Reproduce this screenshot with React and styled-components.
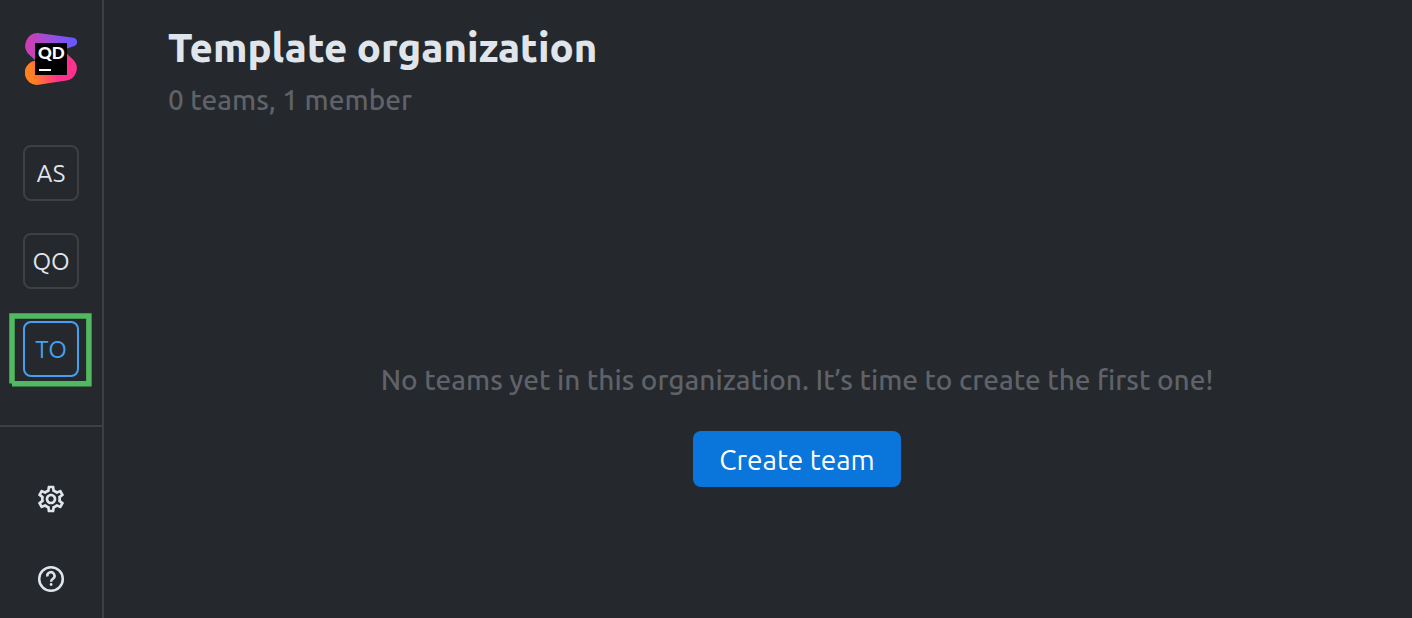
import React from 'react';
import styled, { createGlobalStyle } from 'styled-components';
import { MdOutlineSettings } from 'react-icons/md';

const GlobalStyle = createGlobalStyle`
  * { box-sizing: border-box; }
  body {
    margin: 0;
    background: #25282c;
    color: #dfe5eb;
    font-family: Ubuntu, "Noto Sans", sans-serif;
  }
`;

const Page = styled.div`
  display: flex;
  min-height: 100vh;
`;

const Sidebar = styled.aside`
  flex: none;
  display: flex;
  flex-direction: column;
  width: 104px;
  border-right: 2px solid #3e4044;
`;

const LogoLink = styled.a`
  display: block;
  align-self: center;
  height: 52px;
  margin-top: 33px;
`;

const Organizations = styled.nav`
  display: flex;
  flex-direction: column;
  align-items: center;
  gap: 32px;
  padding: 60px 0 48px;
  border-bottom: 2px solid #3e4044;
`;

const OrgSlot = styled.div`
  position: relative;
`;

const OrgButton = styled.button`
  display: grid;
  place-items: center;
  width: 56px;
  height: 56px;
  padding: 2px 0 0;
  border: 2px solid ${(p) => (p.$active ? '#46a0f0' : '#3e4044')};
  border-radius: 8px;
  background: transparent;
  color: ${(p) => (p.$active ? '#46a0f0' : '#dfe5eb')};
  font: inherit;
  font-size: 24px;
  line-height: 32px;
  cursor: pointer;
`;

const Highlight = styled.svg`
  position: absolute;
  top: -8px;
  left: -14px;
  pointer-events: none;
`;

const Tools = styled.div`
  display: flex;
  flex-direction: column;
  align-items: center;
  gap: 48px;
  padding: 56px 0 20px;
`;

const ToolButton = styled.button`
  display: block;
  width: 32px;
  height: 32px;
  padding: 0;
  border: 0;
  background: none;
  color: #dfe5eb;
  cursor: pointer;

  svg { display: block; }
`;

const Main = styled.main`
  flex: 1;
  display: flex;
  flex-direction: column;
  min-width: 0;
  padding: 24px 0 24px 64px;
`;

const Title = styled.h1`
  margin: 0;
  font-size: 40px;
  font-weight: 800;
  line-height: 48px;
`;

const Muted = styled.p`
  margin: 0;
  color: #5f6268;
  font-size: 28px;
  font-weight: 500;
  line-height: 40px;
`;

const Summary = styled(Muted)`
  margin-top: 8px;
`;

const EmptyState = styled.section`
  display: flex;
  flex-direction: column;
  align-items: center;
  gap: 31px;
  margin-top: 240px;
  padding-left: 14px;
  text-align: center;
`;

const PrimaryButton = styled.button`
  min-width: 208px;
  height: 56px;
  padding: 2px 16px 0;
  border: 0;
  border-radius: 8px;
  background: #0a75da;
  color: #fff;
  font: inherit;
  font-size: 28px;
  line-height: 40px;
  cursor: pointer;
`;

const LogoText = styled.text`
  fill: #fff;
  font-family: Lato, sans-serif;
  font-size: 17px;
  font-weight: 900;
`;

function Logo() {
  return (
    <svg width="52" height="52" viewBox="0 0 52 52" role="img" aria-label="Qodana">
      <defs>
        <linearGradient id="violet" x1="0" y1="14" x2="52" y2="6" gradientUnits="userSpaceOnUse">
          <stop offset="0.1" stopColor="#cb3fb6" />
          <stop offset="0.5" stopColor="#9a4fdc" />
          <stop offset="0.9" stopColor="#6b57ff" />
        </linearGradient>
        <linearGradient id="flame" x1="4" y1="44" x2="44" y2="32" gradientUnits="userSpaceOnUse">
          <stop offset="0.1" stopColor="#ff8020" />
          <stop offset="0.65" stopColor="#ff318c" />
        </linearGradient>
      </defs>
      <path d="M13 0.1 L48.5 4.7 A4.4 4.4 0 0 1 49.5 13 L42 15.500 L22 32 L11 28 L4 21.500 A12.500 12.500 0 0 1 13 0.100Z" fill="url(#violet)" />
      <path d="M41 20 L48 26.500 A12.300 12.300 0 0 1 41.500 47.500 L13.500 51.800 A12.100 12.100 0 0 1 10.200 27.800 L20 27Z" fill="url(#flame)" />
      <path d="M10 10h32v32H10z" />
      <path d="M14 36h12v2H14z" fill="#fff" />
      <LogoText x="13" y="26">QD</LogoText>
    </svg>
  );
}

function HelpIcon() {
  return (
    <svg width="32" height="32" viewBox="0 0 32 32" fill="none" stroke="currentColor" strokeWidth="2.5" aria-hidden="true">
      <circle cx="16" cy="16" r="11.8" />
      <path d="M12.400 13.500 A3.600 3.600 0 1 1 18.200 15.600 C16.700 16.700 16.100 17.300 16.100 18.700" />
      <circle cx="16.100" cy="21.500" r="1.400" fill="currentColor" stroke="none" />
    </svg>
  );
}

const organizations = ['AS', 'QO', 'TO'];

export default function App() {
  const current = 'TO';
  return (
    <>
      <GlobalStyle />
      <Page>
        <Sidebar>
          <LogoLink href="#"><Logo /></LogoLink>
          <Organizations aria-label="Organizations">
            {organizations.map((name) => (
              <OrgSlot key={name}>
                <OrgButton type="button" $active={name === current}>{name}</OrgButton>
                {name === current && (
                  <Highlight width="84" height="74" fill="none" stroke="#51b95f" strokeWidth="5.5" aria-hidden="true">
                    <path d="M3 70.500V2.900H79.900V70.800H3" />
                    <path d="M0 71h3v3H0z" fill="#25282c" stroke="none" />
                  </Highlight>
                )}
              </OrgSlot>
            ))}
          </Organizations>
          <Tools>
            <ToolButton type="button" aria-label="Settings"><MdOutlineSettings size={32} /></ToolButton>
            <ToolButton type="button" aria-label="Help"><HelpIcon /></ToolButton>
          </Tools>
        </Sidebar>
        <Main>
          <Title>Template organization</Title>
          <Summary>0 teams, 1 member</Summary>
          <EmptyState>
            <Muted>No teams yet in this organization. It’s time to create the first one!</Muted>
            <PrimaryButton type="button">Create team</PrimaryButton>
          </EmptyState>
        </Main>
      </Page>
    </>
  );
}
